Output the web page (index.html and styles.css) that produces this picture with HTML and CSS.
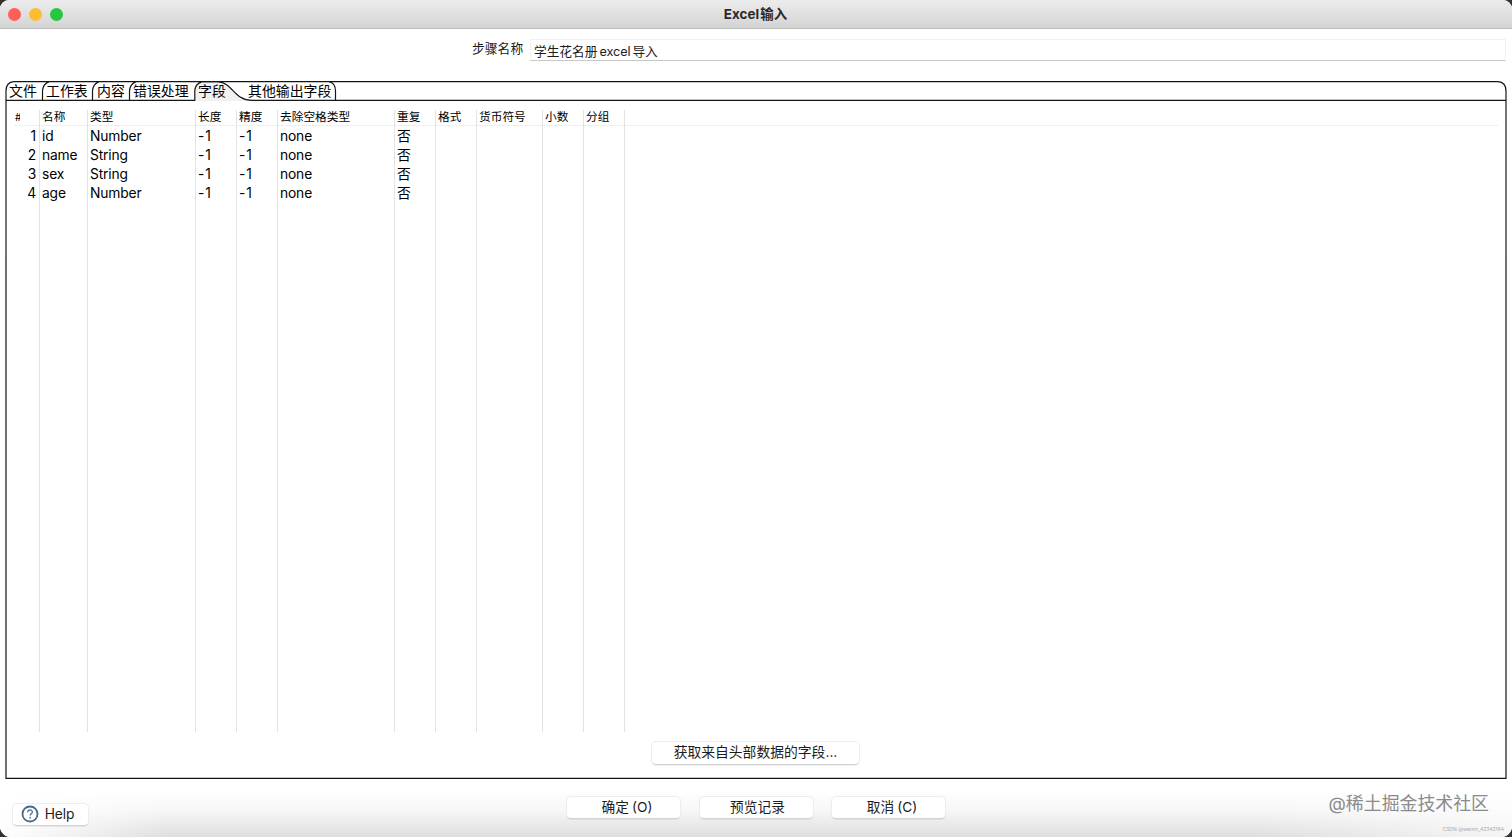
FILE: index.html
```html
<!DOCTYPE html>
<html lang="zh-CN">
<head>
<meta charset="utf-8">
<title>Excel输入</title>
<link rel="stylesheet" href="styles.css">
</head>
<body>
<div class="window">
  <header class="titlebar">
    <div class="lights"><i class="light red"></i><i class="light amber"></i><i class="light green"></i></div>
    <h1 class="title">Excel<span class="title-cjk">输入</span></h1>
  </header>
  <div class="step">
    <label class="step-label">步骤名称</label>
    <div class="step-input">学生花名册<span class="latin">excel</span>导入</div>
  </div>
  <main class="panel">
    <svg class="outline" width="1512" height="698" viewBox="0 81 1512 698" fill="none" stroke="#151515" stroke-width="1.2">
      <path d="M195 101V90Q195 82 202 82H220C233 84 236 98 250 101Z" fill="#f1f1f1" stroke="none"/>
      <path d="M6 778.3V91Q6 82 14 81.6H1498Q1506 82 1506 91V778.3Z"/>
      <path d="M6 100.4H194.800V91Q195 84 202 81.6H218C233 83 234 100.400 252 100.400H1506"/>
      <path d="M42.500 100V91Q43 84 49 81.600M92.500 100V91Q93 84 99 81.600M129.500 100V91Q130 84 136 81.600M329 81.600Q335.500 83 335.500 91V100"/>
    </svg>
    <nav class="tabs">
      <span class="tab t-file">文件</span><span class="tab t-sheet">工作表</span><span class="tab t-content">内容</span><span class="tab t-error">错误处理</span><span class="tab t-fields">字段</span><span class="tab t-extra">其他输出字段</span>
    </nav>
    <div class="table">
      <div class="col c-num"><div class="head hash"><span class="hash-clip">#</span></div><div>1</div><div>2</div><div>3</div><div>4</div></div>
      <div class="col c-name"><div class="head">名称</div><div>id</div><div>name</div><div>sex</div><div>age</div></div>
      <div class="col c-type"><div class="head">类型</div><div>Number</div><div>String</div><div>String</div><div>Number</div></div>
      <div class="col c-len"><div class="head">长度</div><div>-1</div><div>-1</div><div>-1</div><div>-1</div></div>
      <div class="col c-len"><div class="head">精度</div><div>-1</div><div>-1</div><div>-1</div><div>-1</div></div>
      <div class="col c-trim"><div class="head">去除空格类型</div><div>none</div><div>none</div><div>none</div><div>none</div></div>
      <div class="col c-flag"><div class="head">重复</div><div>否</div><div>否</div><div>否</div><div>否</div></div>
      <div class="col c-flag"><div class="head">格式</div></div>
      <div class="col c-currency"><div class="head">货币符号</div></div>
      <div class="col c-flag"><div class="head">小数</div></div>
      <div class="col c-flag"><div class="head">分组</div></div>
      <div class="col c-rest"><div class="head"></div></div>
    </div>
    <div class="fetch-row"><button class="btn fetch">获取来自头部数据的字段...</button></div>
  </main>
  <footer class="footer">
    <button class="btn help">
      <svg width="18" height="18" viewBox="0 0 18 18" fill="none"><circle cx="9" cy="9" r="7.500" stroke="#466b8b" stroke-width="1.800"/><path d="M6.700 7.200C6.700 4.300 11.400 4.300 11.400 7C11.400 8.700 9.100 8.600 9.100 10.600" stroke="#5c7e9b" stroke-width="1.400"/><circle cx="9.100" cy="12.700" r=".95" fill="#5c7e9b"/></svg>
      <span>Help</span>
    </button>
    <div class="actions">
      <button class="btn action">确定<span class="key">(O)</span></button>
      <button class="btn action preview">预览记录</button>
      <button class="btn action">取消<span class="key">(C)</span></button>
    </div>
    <div class="marks">
      <div class="mark">@稀土掘金技术社区</div>
      <div class="submark">CSDN @weixin_42342164</div>
    </div>
  </footer>
</div>
</body>
</html>
```

FILE: styles.css
```css
* { box-sizing: border-box; }
body {
  margin: 0;
  background: #34322f;
  font-family: Inter, "Noto Sans CJK SC", sans-serif;
  color: #1c1c1c;
}
.window {
  display: flex;
  flex-direction: column;
  width: 1512px;
  height: 837px;
  overflow: hidden;
  background: #fff;
  border-radius: 9px 9px 11px 11px;
}
.titlebar {
  display: grid;
  grid-template-columns: 1fr auto 1fr;
  align-items: center;
  height: 29px;
  flex: none;
  background: linear-gradient(#ececec, #d4d4d4);
  border-bottom: 1px solid #bcbcbc;
}
.lights { display: flex; gap: 8px; padding-left: 8px; }
.light { width: 13px; height: 13px; border-radius: 50%; }
.red { background: #fe5f58; }
.amber { background: #febc30; }
.green { background: #28c640; }
.title { margin: 0; padding-right: 1px; font-size: 13.400px; font-weight: 700; line-height: 28px; color: #2a2a2a; letter-spacing: .1px; }
.title-cjk { margin-left: 1px; }
.step { display: flex; height: 52px; flex: none; padding: 10px 6px 0 472px; }
.step-label { width: 58px; font-size: 12.800px; line-height: 19px; }
.step-input {
  flex: 1;
  height: 22px;
  padding-left: 3px;
  border: 1px solid #f1f1f1;
  border-bottom-color: #c8c8c8;
  font-size: 12.700px;
  line-height: 23px;
}
.latin { margin: 0 2px; letter-spacing: -.1px; }
.panel { position: relative; display: flex; flex-direction: column; height: 698px; flex: none; }
.outline { position: absolute; left: 0; top: 0; }
.tabs { position: relative; display: flex; height: 29px; flex: none; padding-left: 9px; font-size: 13.900px; line-height: 20px; color: #000; }
.tab { white-space: nowrap; }
.t-file { width: 37px; }
.t-sheet { width: 51px; }
.t-content { width: 36px; }
.t-error { width: 65px; }
.t-fields { width: 50px; }
.table {
  position: relative;
  display: flex;
  height: 622px;
  flex: none;
  margin: 0 14px;
  font-size: 13.800px;
  line-height: 19px;
  color: #000;
}
.col { flex: none; padding-left: 2px; border-left: 1px solid #e3e3e3; white-space: nowrap; }
.col > div:not(.head) { height: 19px; line-height: 20px; letter-spacing: -.15px; }
.head { height: 16px; margin-left: -2px; padding-left: 2px; border-bottom: 1px solid #efefef; font-size: 11.700px; line-height: 14px; }
.c-num { width: 25px; padding: 0 3px 0 0; border-left: 0; text-align: right; }
.c-num .head { margin: 0 -3px 0 0; padding-left: 1px; text-align: left; }
.hash-clip { display: block; width: 5px; overflow: hidden; font-size: 10px; }
.c-name { width: 48px; }
.c-type { width: 108px; }
.c-len { width: 41px; }
.c-len > div:not(.head) { letter-spacing: 1px; }
.c-trim { width: 117px; }
.c-flag { width: 41px; }
.c-currency { width: 66px; }
.c-rest { flex: 1; }
.fetch-row { position: relative; display: flex; justify-content: center; padding-top: 9px; }
.btn {
  display: flex;
  align-items: center;
  justify-content: center;
  padding: 0 0 2px;
  border: 1px solid #ededed;
  border-bottom-color: #d2d2d2;
  border-radius: 5px;
  background: #fff;
  box-shadow: 0 1px 1px #00000012;
  color: #1c1c1c;
  font: 13.800px/20px Inter, "Noto Sans CJK SC", sans-serif;
}
.fetch { width: 209px; height: 24px; margin-right: 1px; }
.footer {
  display: grid;
  grid-template-columns: 566px 380px 1fr;
  height: 58px;
  flex: none;
  background:
    linear-gradient(90deg, #fff 0, #fff0 170px, #fff0 1250px, #ffffffb0 100%),
    linear-gradient(#fff 12px, #f6f6f6 32px, #dedede);
}
.help { width: 77px; height: 23px; margin: 24px 0 0 12px; gap: 6px; padding-right: 6px; letter-spacing: -.1px; }
.actions { display: flex; justify-content: space-between; padding-top: 17px; }
.action { width: 115px; height: 23px; padding-left: 7px; font-size: 13.700px; }
.preview { padding-left: 3px; }
.key { margin-left: 3px; }
.marks { display: flex; flex-direction: column; align-items: flex-end; }
.mark { margin: 11px 23px 0 0; font-size: 17.900px; line-height: 27px; color: #8b8b8b; white-space: nowrap; }
.submark { margin: 7px 8px 0 0; font-size: 5px; line-height: 11px; color: #aaa; white-space: nowrap; }
```
